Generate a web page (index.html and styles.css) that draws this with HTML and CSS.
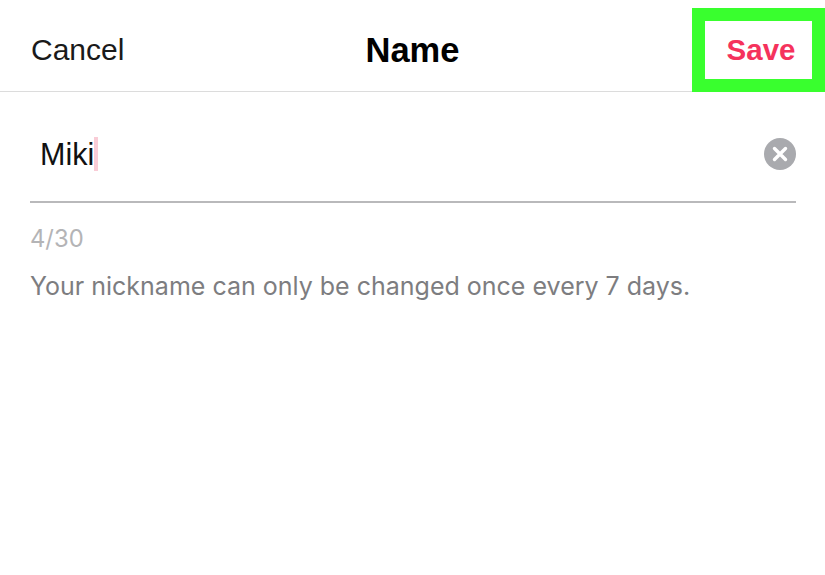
FILE: index.html
```html
<!DOCTYPE html>
<html lang="en">

<head>
    <meta charset="UTF-8">
    <meta name="viewport" content="width=device-width, initial-scale=1.0">
    <title>Name</title>
    <link rel="stylesheet" href="styles.css">
</head>

<body>
    <header class="top-bar">
        <span class="cancel">Cancel</span>
        <h1 class="title">Name</h1>
        <span class="save">Save</span>
    </header>

    <main class="content">
        <div class="name-field">
            <span class="name-value">Miki</span>
            <span class="caret"></span>
            <svg class="clear-icon" viewBox="0 0 32 32">
                <circle cx="16" cy="16" r="16" fill="#a9aaae" />
                <path d="M10.5 10.5 21.5 21.5M21.5 10.5 10.5 21.5" stroke="#fff" stroke-width="3.4" stroke-linecap="round" />
            </svg>
        </div>
        <p class="counter">4/30</p>
        <p class="hint">Your nickname can only be changed once every 7 days.</p>
    </main>
</body>

</html>
```

FILE: styles.css
```css
* {
    box-sizing: border-box;
}

body {
    margin: 0;
    height: 575px;
    background: #fff;
    font-family: "Liberation Sans", Arial, sans-serif;
    overflow: hidden;
}

.top-bar {
    position: relative;
    display: flex;
    align-items: center;
    justify-content: center;
    height: 92px;
    padding-top: 9px;
    border-bottom: 1px solid #dcdcdc;
}

.cancel {
    position: absolute;
    left: 31px;
    font-size: 30px;
    color: #1a1a1a;
}

.title {
    margin: 0;
    font-size: 34.5px;
    font-weight: bold;
    color: #000;
}

/* green highlight lies over the header */
.save {
    position: absolute;
    top: 8px;
    right: 0;
    width: 133px;
    height: 84px;
    border: 13px solid #39ff2e;
    padding-left: 5px;
    display: flex;
    align-items: center;
    justify-content: center;
    font-size: 29.5px;
    font-weight: bold;
    color: #f5325c;
}

.content {
    padding: 0 29px 0 30px;
}

.name-field {
    display: flex;
    align-items: center;
    height: 111px;
    padding-top: 15px;
    padding-left: 10px;
    border-bottom: 2px solid #b9b9bb;
}

.name-value {
    font-size: 30.5px;
    color: #111;
}

.caret {
    width: 4px;
    height: 34px;
    background: #f9ccd6;
}

.clear-icon {
    width: 32px;
    height: 32px;
    margin-left: auto;
}

.counter {
    margin: 22px 0 0;
    font-family: Inter, sans-serif;
    font-size: 23.8px;
    line-height: 28px;
    color: #b4b4b6;
}

.hint {
    margin: 18px 0 0;
    font-family: Inter, sans-serif;
    font-size: 25px;
    line-height: 30px;
    color: #7d7d80;
}
```
